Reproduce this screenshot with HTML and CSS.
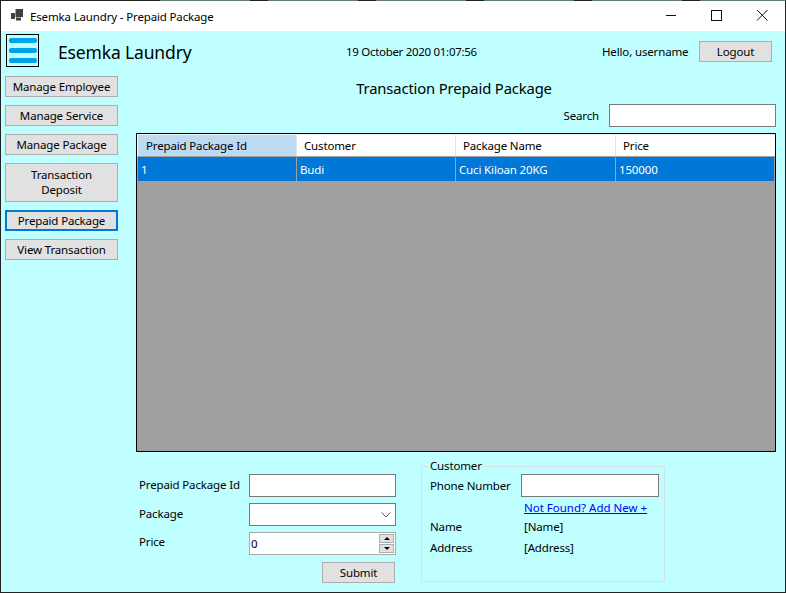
FILE: index.html
```html
<!DOCTYPE html>
<html>
<head>
<title>Esemka Laundry - Prepaid Package</title>
<link rel="stylesheet" href="styles.css">
</head>
<body>
<div class="window">
    <div class="frame-top"></div>
    <div class="titlebar">
        <svg class="app-icon" width="16" height="16" viewBox="0 0 16 16">
            <rect x="1" y="5" width="4" height="6" fill="#404040"/>
            <path d="M5.500 1H13v8H5.500z" fill="#404040"/>
            <rect x="6" y="9.500" width="5" height="3" fill="#404040"/>
        </svg>
        <span class="title-text">Esemka Laundry - Prepaid Package</span>
        <div class="caption">
            <svg width="46" height="30" viewBox="0 0 46 30"><path d="M19 14.500h10" stroke="#111" fill="none"/></svg>
            <svg width="46" height="30" viewBox="0 0 46 30"><rect x="18.500" y="9.500" width="10" height="10" stroke="#111" fill="none"/></svg>
            <svg width="46" height="30" viewBox="0 0 46 30"><path d="M18 9l10.500 10.500M28.500 9L18 19.500" stroke="#111" fill="none"/></svg>
        </div>
    </div>
    <div class="client">
        <div class="topbar">
            <div class="menu-icon"><span></span><span></span><span></span></div>
            <div class="app-name">Esemka Laundry</div>
            <div class="clock">19 October 2020 01:07:56</div>
            <div class="hello">Hello, username</div>
            <button class="btn logout" type="button">Logout</button>
        </div>
        <div class="columns">
            <div class="sidebar">
                <button class="btn side" type="button">Manage Employee</button>
                <button class="btn side" type="button">Manage Service</button>
                <button class="btn side" type="button">Manage Package</button>
                <button class="btn side tall" type="button">Transaction<br>Deposit</button>
                <button class="btn side active" type="button">Prepaid Package</button>
                <button class="btn side" type="button">View Transaction</button>
            </div>
            <div class="main">
                <h1 class="page-title">Transaction Prepaid Package</h1>
                <div class="search-row">
                    <label for="search">Search</label>
                    <input id="search" class="field search" type="text">
                </div>
                <div class="grid">
                    <div class="grid-row grid-head">
                        <div class="cell current">Prepaid Package Id</div>
                        <div class="cell">Customer</div>
                        <div class="cell">Package Name</div>
                        <div class="cell">Price</div>
                    </div>
                    <div class="grid-row grid-selected">
                        <div class="cell">1</div>
                        <div class="cell">Budi</div>
                        <div class="cell">Cuci Kiloan 20KG</div>
                        <div class="cell">150000</div>
                    </div>
                </div>
                <div class="bottom">
                    <div class="form">
                        <div class="form-row lift-1">
                            <label for="pid">Prepaid Package Id</label>
                            <input id="pid" class="field" type="text">
                        </div>
                        <div class="form-row lift-1">
                            <label>Package</label>
                            <div class="field combo">
                                <svg width="10" height="6" viewBox="0 0 10 6"><path d="M.5.5L5 5 9.500.5" stroke="#606060" fill="none"/></svg>
                            </div>
                        </div>
                        <div class="form-row lift-3">
                            <label>Price</label>
                            <div class="field numeric">
                                <span>0</span>
                                <div class="spin">
                                    <div class="spin-btn"><i class="arrow up"></i></div>
                                    <div class="spin-btn"><i class="arrow down"></i></div>
                                </div>
                            </div>
                        </div>
                        <div class="submit-row"><button class="btn submit" type="button">Submit</button></div>
                    </div>
                    <fieldset class="customer">
                        <legend>Customer</legend>
                        <div class="cust-row phone">
                            <label for="phone">Phone Number</label>
                            <input id="phone" class="field" type="text">
                        </div>
                        <a class="add-new" href="#">Not Found? Add New +</a>
                        <div class="cust-row info name"><span>Name</span><span class="value">[Name]</span></div>
                        <div class="cust-row info address"><span>Address</span><span class="value">[Address]</span></div>
                    </fieldset>
                </div>
            </div>
        </div>
    </div>
</div>
</body>
</html>
```
FILE: styles.css
```css
html, body
{
    margin: 0;
    padding: 0;
    height: 100%;
    overflow: hidden;
}
body
{
    font-family: "Noto Sans", "Open Sans", sans-serif;
    font-size: 11.5px;
    letter-spacing: -0.15px;
    color: #000;
    background: #222;
}
.window
{
    width: 786px;
    height: 593px;
    display: flex;
    flex-direction: column;
    box-sizing: border-box;
    border: 1px solid #222;
    border-top: none;
    background: #bfffff;
}
/* the desktop shows through the top row of the frame */
.frame-top
{
    height: 1px;
    flex: none;
    margin: 0 -1px;
    background:
        linear-gradient(to right, #222 160px, transparent 160px),
        repeating-linear-gradient(to right, #5f7a78 160px, #5f7a78 250px, #222 250px, #222 268px);
}
.titlebar
{
    height: 30px;
    flex: none;
    display: flex;
    align-items: center;
    background: #fff;
}
.app-icon { margin-left: 9px; }
.title-text { margin-left: 4px; }
.caption { margin-left: auto; display: flex; }
.client { flex: 1; display: flex; flex-direction: column; }
.topbar
{
    height: 45px;
    flex: none;
    display: flex;
    align-items: center;
    padding-bottom: 4px;
    box-sizing: border-box;
}
.menu-icon
{
    width: 33px;
    height: 33px;
    box-sizing: border-box;
    margin: 3px 0 0 5px;
    align-self: flex-start;
    border: 1px solid #000;
    display: flex;
    flex-direction: column;
    justify-content: center;
    gap: 5px;
    align-items: center;
}
.menu-icon span
{
    width: 28px;
    height: 5px;
    border-radius: 2px;
    background: #00a2e8;
}
.app-name { margin-left: 19px; width: 288px; font-size: 17.5px; }
.clock { width: 256px; letter-spacing: -0.3px; }
.hello { width: 97px; }
.btn
{
    font: inherit;
    letter-spacing: inherit;
    color: #000;
    padding: 0;
    background: #e1e1e1;
    border: 1px solid #adadad;
    box-sizing: border-box;
    height: 21px;
}
.logout { width: 73px; }
.columns { flex: 1; display: flex; }
.sidebar
{
    width: 135px;
    flex: none;
    padding-left: 4px;
    box-sizing: border-box;
    display: flex;
    flex-direction: column;
    gap: 8px;
}
.side { width: 113px; }
.tall { height: 39px; padding-bottom: 2px; }
.active { border: 2px solid #0078d7; }
.main { width: 640px; }
.page-title
{
    margin: 2px 0 0 -4px;
    font-size: 14.8px;
    font-weight: normal;
    text-align: center;
    line-height: 20px;
}
.search-row
{
    display: flex;
    justify-content: flex-end;
    align-items: center;
    gap: 10px;
    height: 23px;
    margin-top: 6px;
}
.field
{
    display: block;
    box-sizing: border-box;
    height: 23px;
    border: 1px solid #7a7a7a;
    background: #fff;
    font: inherit;
    padding: 0;
    outline: none;
}
.search { width: 167px; }
.grid
{
    margin-top: 6px;
    height: 319px;
    box-sizing: border-box;
    border: 1px solid #000;
    background: #a0a0a0;
}
.grid-row { display: grid; grid-template-columns: 159px 159px 160px 1fr; }
.grid-head
{
    height: 23px;
    box-sizing: border-box;
    background: #fff;
    border-top: 1px solid #f0f0f0;
    border-left: 1px solid #fff;
    border-bottom: 1px solid #a0a0a0;
}
.grid-head .cell
{
    padding-left: 7px;
    line-height: 21px;
    border-right: 1px solid #e3e3e3;
}
.grid-head .current { padding-left: 8px; background: #bcdaf2; }
.grid-head .cell:last-child { border-right: none; }
.grid-selected { height: 24px; margin: 0 1px; background: #0078d7; color: #fff; }
.grid-selected .cell
{
    padding: 1px 0 0 3px;
    line-height: 24px;
    height: 24px;
    box-sizing: border-box;
    border-right: 1px solid #a0a0a0;
}
.grid-selected .cell:last-child { border-right: none; }
.bottom { display: flex; }
.form { width: 285px; padding: 22px 0 0 3px; box-sizing: border-box; }
.form-row { display: flex; align-items: center; height: 23px; margin-bottom: 6px; }
.form-row label { width: 110px; }
.lift-1 label { padding-bottom: 2px; }
.lift-3 label { padding-bottom: 4px; }
.form-row .field { width: 147px; }
.combo { display: flex; align-items: center; justify-content: flex-end; padding-right: 4px; }
.numeric { display: flex; align-items: center; border-color: #a9a9a9; padding-left: 1px; justify-content: space-between; }
.spin { width: 15px; margin-right: 1px; display: flex; flex-direction: column; gap: 1px; }
.spin-btn { height: 9px; background: #e1e1e1; border: 1px solid #adadad; box-sizing: border-box; display: flex; align-items: center; justify-content: center; }
.arrow { width: 0; height: 0; border-left: 3px solid transparent; border-right: 3px solid transparent; }
.up { border-bottom: 3px solid #000; }
.down { border-top: 3px solid #000; }
.submit-row { display: flex; justify-content: flex-end; margin-right: 26px; margin-top: 7px; }
.submit { width: 73px; }
.customer
{
    margin: 6px 0 0;
    width: 244px;
    height: 124px;
    box-sizing: border-box;
    padding: 0 5px 0 8px;
    border: 1px solid #d5dfe5;
}
.customer legend { padding: 0 1px; margin-left: -1px; line-height: 16px; }
.cust-row { display: flex; }
.phone { align-items: center; margin-top: 0; }
.phone label { width: 91px; }
.phone .field { width: 138px; }
.add-new { display: block; margin: 3px 0 0 94px; color: #0000ff; line-height: 16px; letter-spacing: 0; }
.info { line-height: 16px; }
.name { margin-top: 3px; }
.address { margin-top: 5px; }
.info span:first-child { width: 94px; }
```
